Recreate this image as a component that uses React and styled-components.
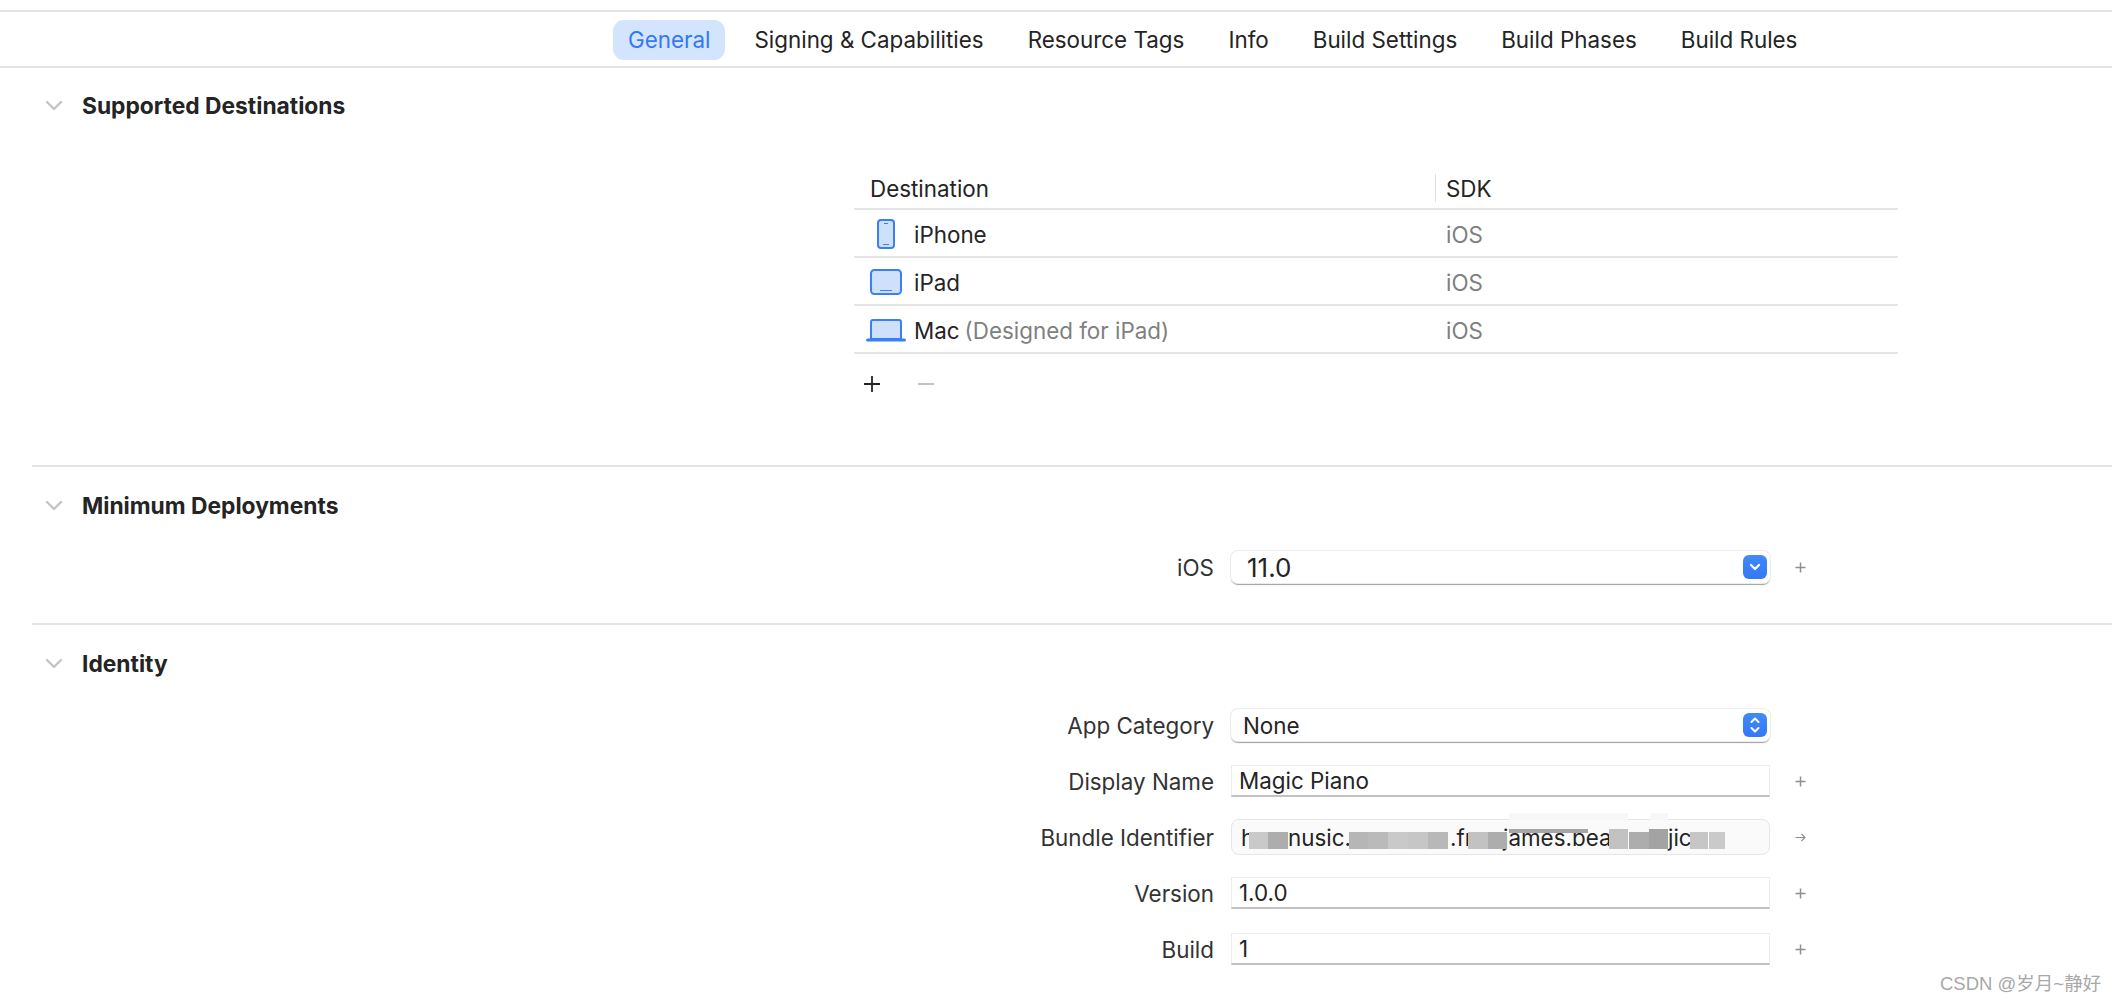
import styled, { createGlobalStyle } from 'styled-components';

const GlobalStyle = createGlobalStyle`
  html, body {
    margin: 0;
    padding: 0;
    background: #fff;
    overflow: hidden;
  }
  body {
    font-family: Inter, "Noto Sans", "Liberation Sans", sans-serif;
    color: #242424;
  }
`;

const Page = styled.div`
  position: relative;
  width: 2112px;
  height: 1002px;
  padding-top: 10px;
  box-sizing: border-box;
  overflow: hidden;
`;

const TabBar = styled.nav`
  display: flex;
  gap: 14px;
  height: 58px;
  padding: 8px 0 0 613px;
  box-sizing: border-box;
  border-top: 2px solid #e4e4e4;
  border-bottom: 2px solid #e4e4e4;
`;

const Tab = styled.div`
  display: flex;
  align-items: center;
  height: 40px;
  padding: 0 15px 2px;
  box-sizing: border-box;
  border-radius: 11px;
  font-size: 22.4px;
  white-space: nowrap;
  color: ${p => (p.$active ? '#3478f6' : '#242424')};
  background: ${p => (p.$active ? '#d3e4fd' : 'transparent')};
`;

const Section = styled.section`
  margin-left: 32px;
  height: ${p => p.$height}px;
  box-sizing: border-box;
  padding-top: ${p => p.$top}px;
  border-bottom: ${p => (p.$last ? 'none' : '2px solid #e4e4e4')};
`;

const SectionHead = styled.header`
  display: flex;
  align-items: center;
  height: 30px;
  padding-left: 13px;
  gap: 19px;
`;

const Title = styled.h2`
  margin: 0;
  padding-bottom: 2px;
  font-size: 22.8px;
  font-weight: 700;
  color: #242424;
`;

const DestTable = styled.div`
  width: 1044px;
  margin: 53px 0 0 822px;
`;

const HeadRow = styled.div`
  display: grid;
  grid-template-columns: 581px 1fr;
  height: 34px;
  border-bottom: 2px solid #e4e4e4;
  font-size: 22.4px;
`;

const HeadCell = styled.div`
  display: flex;
  align-items: center;
  height: 28px;
  padding-left: ${p => (p.$sdk ? '10px' : '16px')};
  border-left: ${p => (p.$sdk ? '1px solid #e0e0e0' : 'none')};
`;

const DestRow = styled.div`
  display: grid;
  grid-template-columns: 581px 1fr;
  align-items: center;
  height: 44px;
  padding-top: 2px;
  border-bottom: 2px solid #e4e4e4;
  font-size: 22.4px;
`;

const DestName = styled.div`
  display: flex;
  align-items: center;
  padding-left: 3px;
`;

const IconSlot = styled.div`
  display: flex;
  justify-content: center;
  width: 57px;
`;

const Muted = styled.span`
  color: #808080;
  margin-left: 5px;
`;

const Sdk = styled.div`
  padding: 1px 0 0 11px;
  color: #808080;
`;

const AddRemove = styled.div`
  display: flex;
  align-items: center;
  gap: 36px;
  margin: 21px 0 0 9px;
`;

const Form = styled.div`
  display: flex;
  flex-direction: column;
`;

const FormRow = styled.div`
  display: grid;
  grid-template-columns: 1182px 539px 60px;
  column-gap: 17px;
  align-items: center;
  height: ${p => p.$height || 32}px;
  margin-top: ${p => p.$top || 0}px;
`;

const Label = styled.label`
  text-align: right;
  font-size: 22.4px;
  color: #333;
`;

const Select = styled.div`
  display: flex;
  align-items: center;
  justify-content: space-between;
  height: 32px;
  padding: 0 3px 0 ${p => p.$pad}px;
  box-sizing: border-box;
  border-radius: 7px;
  background: #fff;
  box-shadow: 0 0 0 1px #ececec, 0 1.5px 1px 0 #a0a0a0;
  font-size: ${p => p.$size}px;
`;

const SelectButton = styled.div`
  display: flex;
  align-items: center;
  justify-content: center;
  width: 24px;
  height: 24px;
  border-radius: 6px;
  background: linear-gradient(#3f8af8, #3478f6);
`;

const TextField = styled.div`
  display: flex;
  align-items: center;
  height: 32px;
  padding-left: 7px;
  box-sizing: border-box;
  background: #fff;
  border: 1px solid #ececec;
  border-bottom: 2px solid #c2c2c2;
  font-size: 22.4px;
`;

const ReadOnlyField = styled.div`
  position: relative;
  display: flex;
  align-items: center;
  height: 36px;
  box-sizing: border-box;
  border: 1px solid #e6e6e6;
  border-radius: 8px;
  background: #fafafa;
  font-size: 22.4px;
`;

const Piece = styled.span`
  display: block;
  width: ${p => p.$w}px;
  padding-left: ${p => p.$pad || 0}px;
  box-sizing: border-box;
  white-space: nowrap;
  flex: none;
`;

const Mosaic = styled.div`
  position: absolute;
  left: -1px;
  top: -1px;
`;

const Tile = styled.i`
  position: absolute;
  left: ${p => p.$x - 1231}px;
  top: ${p => p.$y - 819}px;
  width: ${p => p.$w}px;
  height: ${p => p.$h}px;
  background: ${p => p.$c};
`;

const SideIcon = styled.div`
  display: flex;
  padding-left: 8px;
`;

const Watermark = styled.div`
  position: absolute;
  left: 1940px;
  top: 973px;
  font-family: "Liberation Sans", "Noto Sans CJK SC", sans-serif;
  font-size: 18.5px;
  line-height: 22px;
  color: #a8a8a8;
  white-space: nowrap;
`;

const Chevron = () => (
  <svg width="18" height="12" viewBox="0 0 18 12" fill="none">
    <path d="M2 2l7 7 7-7" stroke="#c4c4c4" strokeWidth="2.4" strokeLinecap="round" strokeLinejoin="round" />
  </svg>
);

const IPhoneIcon = () => (
  <svg width="18" height="30" viewBox="0 0 18 30" fill="none">
    <rect x="1" y="1" width="16" height="28" rx="3" fill="#cfe0fc" stroke="#3b7ff6" strokeWidth="2" />
    <path d="M7 4.5h4M6 25.5h6" stroke="#3b7ff6" strokeWidth="1" />
  </svg>
);

const IPadIcon = () => (
  <svg width="32" height="26" viewBox="0 0 32 26" fill="none">
    <rect x="1" y="1" width="30" height="24" rx="3.5" fill="#cfe0fc" stroke="#3b7ff6" strokeWidth="2" />
    <path d="M10 21.5h12" stroke="#3b7ff6" strokeWidth="1" />
  </svg>
);

const MacIcon = () => (
  <svg width="40" height="23" viewBox="0 0 40 23" fill="none">
    <path d="M5 20V3a2 2 0 0 1 2-2h26a2 2 0 0 1 2 2v17z" fill="#cfe0fc" stroke="#3b7ff6" strokeWidth="2" />
    <path d="M1.5 21h37" stroke="#3b7ff6" strokeWidth="3" strokeLinecap="round" />
  </svg>
);

const Plus = () => (
  <svg width="18" height="18" viewBox="0 0 18 18" fill="none">
    <path d="M9 1v16M1 9h16" stroke="#242424" strokeWidth="1.8" />
  </svg>
);

const Minus = () => (
  <svg width="18" height="18" viewBox="0 0 18 18" fill="none">
    <path d="M1 9h16" stroke="#bdbdbd" strokeWidth="1.8" />
  </svg>
);

const SmallPlus = () => (
  <svg width="11" height="11" viewBox="0 0 11 11" fill="none">
    <path d="M5.5 0.5v10M0.5 5.5h10" stroke="#8e8e8e" strokeWidth="1.5" />
  </svg>
);

const SmallArrow = () => (
  <svg width="11" height="11" viewBox="0 0 11 11" fill="none">
    <path d="M0.5 5.5h9.5M6.5 2l3.5 3.5-3.5 3.5" stroke="#8e8e8e" strokeWidth="1.2" />
  </svg>
);

const SingleArrow = () => (
  <svg width="12" height="9" viewBox="0 0 12 9" fill="none">
    <path d="M2 2l4 4 4-4" stroke="#fff" strokeWidth="2.2" strokeLinecap="round" strokeLinejoin="round" />
  </svg>
);

const DoubleArrow = () => (
  <svg width="12" height="20" viewBox="0 0 12 20" fill="none">
    <path d="M2.5 7l3.5-3.5L9.5 7M2.5 13l3.5 3.5L9.5 13" stroke="#fff" strokeWidth="2" strokeLinecap="round" strokeLinejoin="round" />
  </svg>
);

const TABS = ['General', 'Signing & Capabilities', 'Resource Tags', 'Info', 'Build Settings', 'Build Phases', 'Build Rules'];

const DESTINATIONS = [
  { name: 'iPhone', icon: <IPhoneIcon /> },
  { name: 'iPad', icon: <IPadIcon /> },
  { name: 'Mac', note: '(Designed for iPad)', icon: <MacIcon /> },
];

const BUNDLE_PIECES = [
  { text: 'h', w: 56, pad: 9 },
  { text: 'nusic.', w: 162 },
  { text: '.fr', w: 53 },
  { text: 'james.bea', w: 107 },
  { text: '', w: 58 },
  { text: 'jic', w: 30 },
];

const MOSAIC_TILES = [
  [1249, 832, 19, 17, '#c9c9c9'], [1268, 832, 20, 17, '#adadad'],
  [1349, 832, 19, 17, '#b6b6b6'], [1368, 832, 20, 17, '#bababa'], [1388, 832, 20, 17, '#c9c9c9'],
  [1408, 832, 20, 17, '#c6c6c6'], [1428, 832, 20, 17, '#b8b8b8'],
  [1468, 832, 20, 17, '#c2c2c2'], [1488, 832, 19, 17, '#adadad'],
  [1509, 813, 119, 7, '#f7f7f7'], [1650, 813, 18, 7, '#f7f7f7'],
  [1509, 829, 79, 4, '#a6a6a6'],
  [1609, 829, 19, 20, '#c2c2c2'], [1629, 832, 20, 17, '#adadad'], [1649, 829, 19, 20, '#a3a3a3'],
  [1690, 832, 18, 17, '#c6c6c6'], [1709, 832, 16, 17, '#cacaca'],
];

const App = () => (
  <Page>
    <GlobalStyle />
    <TabBar>
      {TABS.map((tab, index) => (
        <Tab key={tab} $active={index === 0}>{tab}</Tab>
      ))}
    </TabBar>

    <Section $height={399} $top={23}>
      <SectionHead>
        <Chevron />
        <Title>Supported Destinations</Title>
      </SectionHead>
      <DestTable>
        <HeadRow>
          <HeadCell>Destination</HeadCell>
          <HeadCell $sdk>SDK</HeadCell>
        </HeadRow>
        {DESTINATIONS.map(dest => (
          <DestRow key={dest.name}>
            <DestName>
              <IconSlot>{dest.icon}</IconSlot>
              {dest.name}
              {dest.note && <Muted>{dest.note}</Muted>}
            </DestName>
            <Sdk>iOS</Sdk>
          </DestRow>
        ))}
        <AddRemove>
          <Plus />
          <Minus />
        </AddRemove>
      </DestTable>
    </Section>

    <Section $height={158} $top={24}>
      <SectionHead>
        <Chevron />
        <Title>Minimum Deployments</Title>
      </SectionHead>
      <Form>
        <FormRow $top={30}>
          <Label>iOS</Label>
          <Select $pad={16} $size={26}>
            11.0
            <SelectButton><SingleArrow /></SelectButton>
          </Select>
          <SideIcon><SmallPlus /></SideIcon>
        </FormRow>
      </Form>
    </Section>

    <Section $last $top={24}>
      <SectionHead>
        <Chevron />
        <Title>Identity</Title>
      </SectionHead>
      <Form>
        <FormRow $top={30}>
          <Label>App Category</Label>
          <Select $pad={12} $size={22.4}>
            None
            <SelectButton><DoubleArrow /></SelectButton>
          </Select>
        </FormRow>
        <FormRow $top={24}>
          <Label>Display Name</Label>
          <TextField>Magic Piano</TextField>
          <SideIcon><SmallPlus /></SideIcon>
        </FormRow>
        <FormRow $top={22} $height={36}>
          <Label>Bundle Identifier</Label>
          <ReadOnlyField>
            {BUNDLE_PIECES.map(piece => (
              <Piece key={piece.text || 'gap'} $w={piece.w} $pad={piece.pad}>{piece.text}</Piece>
            ))}
            <Mosaic>
              {MOSAIC_TILES.map(([x, y, w, h, c]) => (
                <Tile key={`${x}_${y}`} $x={x} $y={y} $w={w} $h={h} $c={c} />
              ))}
            </Mosaic>
          </ReadOnlyField>
          <SideIcon><SmallArrow /></SideIcon>
        </FormRow>
        <FormRow $top={22}>
          <Label>Version</Label>
          <TextField>1.0.0</TextField>
          <SideIcon><SmallPlus /></SideIcon>
        </FormRow>
        <FormRow $top={24}>
          <Label>Build</Label>
          <TextField>1</TextField>
          <SideIcon><SmallPlus /></SideIcon>
        </FormRow>
      </Form>
    </Section>

    <Watermark>CSDN @岁月~静好</Watermark>
  </Page>
);

export default App;
